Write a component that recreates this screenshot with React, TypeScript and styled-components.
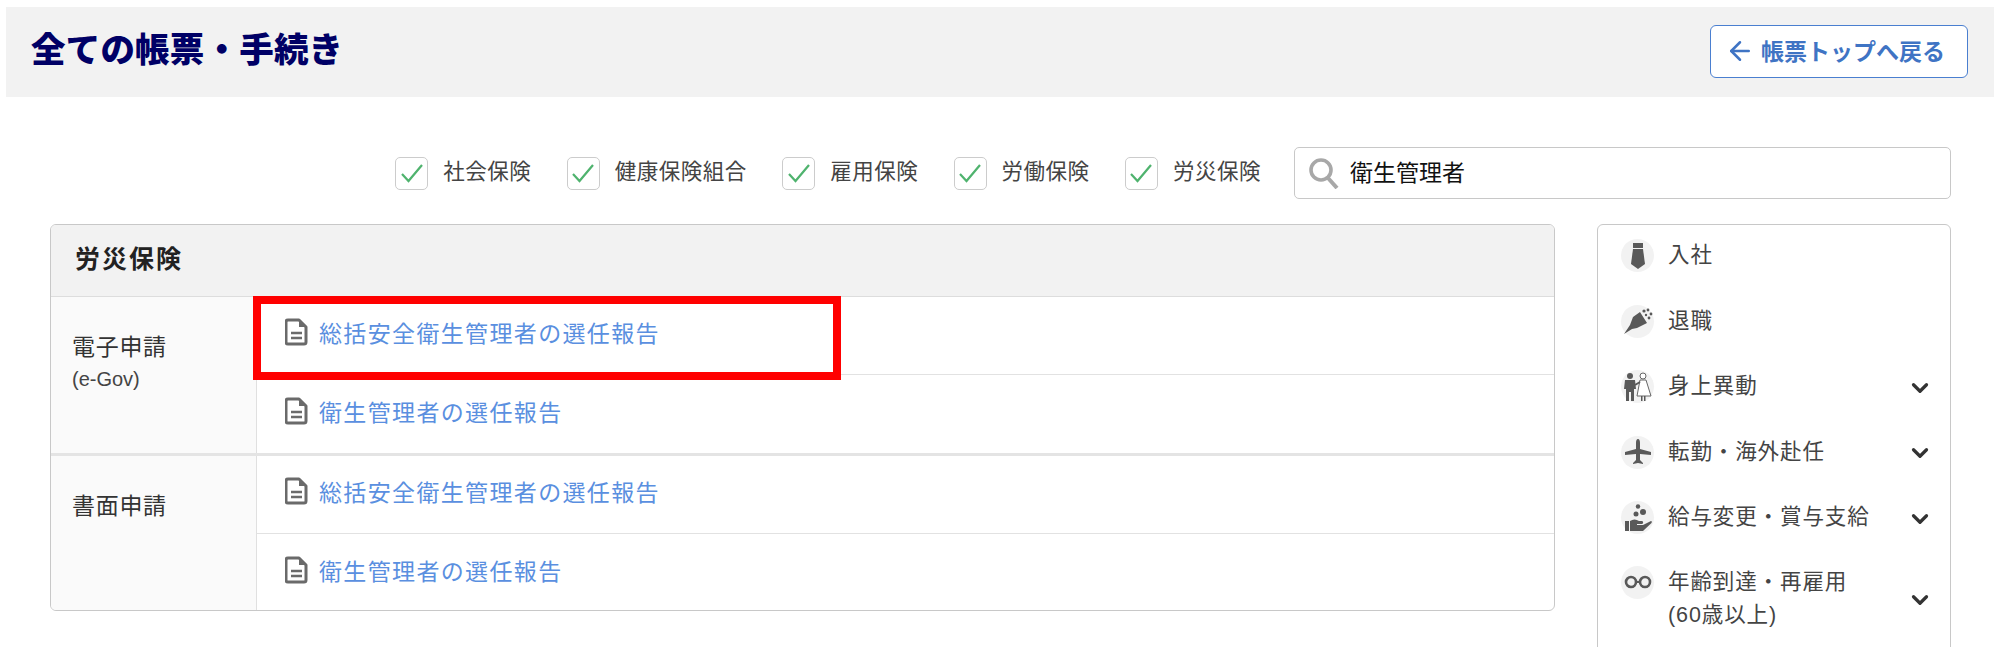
import React from "react";
import styled, { createGlobalStyle } from "styled-components";
import { ArrowLeft, ChevronDown } from "lucide-react";

const Global = createGlobalStyle`
  html, body { margin: 0; padding: 0; height: 647px; overflow: hidden; background: #fff; }
  body { font-family: "Liberation Sans", "Noto Sans CJK JP", sans-serif; color: #333; }
`;
const Page = styled.div`width: 2000px; height: 647px; overflow: hidden; padding-top: 7px; box-sizing: border-box;`;
const TitleBar = styled.header`
  margin-left: 6px; margin-right: 6px; height: 90px; background: #f2f2f2; display: flex; align-items: center;
  justify-content: space-between; padding: 0 26px 0 25px; box-sizing: border-box;
`;
const Title = styled.h1`margin: 0 0 4px; font-size: 34.5px; font-weight: 900; color: #000066; line-height: 1; letter-spacing: .2px;`;
const BackButton = styled.a`
  width: 258px; height: 53px; box-sizing: border-box; margin-bottom: 2px; padding: 0 0 3px 14px; background: #fff; border: 1px solid #4a7fd0; border-radius: 6px;
  display: flex; align-items: center; gap: 6px; color: #3f74c4; font-size: 23px; font-weight: 700; letter-spacing: 0;
  svg { margin-top: 3px; }
`;
const Filters = styled.div`
  margin-top: 50px; padding-right: 49px; display: flex; justify-content: flex-end; align-items: center; height: 52px; gap: 33px;
`;
const Checks = styled.div`display: flex; gap: 35.4px; align-items: center;`;
const CheckItem = styled.label`display: flex; align-items: center; gap: 15px; font-size: 21.5px; letter-spacing: .5px; color: #444; line-height: 33px;`;
const CheckLabel = styled.span`margin-bottom: 2px;`;
const CheckBox = styled.span`
  width: 33px; height: 33px; box-sizing: border-box; border: 1.5px solid #ccc; border-radius: 5px; display: flex; align-items: center; justify-content: center; background: #fff;
`;
const SearchBox = styled.div`
  width: 657px; height: 52px; box-sizing: border-box; border: 1px solid #c8c8c8; border-radius: 5px; display: flex; align-items: center;
  padding: 0 0 0 13px; gap: 11px; font-size: 23px; letter-spacing: 0; color: #111;
`;
const SearchText = styled.span`margin-bottom: 4px;`;
const Content = styled.div`margin: 25px 49px 0 50px; display: flex; gap: 42px; align-items: flex-start; position: relative;`;
const Card = styled.section`
  position: relative; width: 1505px; height: 387px; box-sizing: border-box; border: 1.5px solid #c8c8c8; border-radius: 6px; overflow: hidden;
`;
const CardHead = styled.div`
  height: 72px; box-sizing: border-box; background: #f2f2f2; border-bottom: 1px solid #ddd; padding: 0 0 7px 24px; display: flex; align-items: center;
  font-size: 25px; font-weight: 700; letter-spacing: 2px; color: #222;
`;
const Group = styled.div<{ $last?: boolean }>`
  display: flex; border-bottom: ${(p) => (p.$last ? "0" : "3px solid #e4e4e4")};
`;
const GroupLabel = styled.div`
  width: 206px; box-sizing: border-box; flex: none; background: #fafafa; border-right: 1px solid #e0e0e0; padding: 34px 0 0 21px;
  font-size: 23px; letter-spacing: .7px; line-height: 32px; color: #333;
`;
const Sub = styled.div`font-size: 20px; letter-spacing: 0; line-height: 32px; color: #444;`;
const Rows = styled.div`flex: 1;`;
const Row = styled.div<{ $h: number }>`
  height: ${(p) => p.$h}px; box-sizing: border-box; display: flex; align-items: center; padding: 0 0 7px 28px; gap: 11px; border-bottom: 1px solid #e2e2e2;
  &:last-child { border-bottom: 0; }
`;
const DocLink = styled.a`font-size: 23px; letter-spacing: 1.35px; color: #5a8fe0;`;
const Highlight = styled.div`
  position: absolute; left: 202px; top: 70.5px; width: 588px; height: 84px; box-sizing: border-box; border: 8px solid #f00; pointer-events: none;
`;
const Side = styled.nav`
  width: 354px; flex: none; box-sizing: border-box; border: 1.5px solid #c8c8c8; border-radius: 6px; padding: 0 0 60px 23px;
`;
const SideItem = styled.div<{ $tall?: boolean }>`
  display: flex; box-sizing: border-box; align-items: ${(p) => (p.$tall ? "flex-start" : "center")}; height: ${(p) => (p.$tall ? 100 : 65.5)}px;
  padding: ${(p) => (p.$tall ? "13px 17px 0 0" : "0 17px 4px 0")};
  font-size: 21.5px; letter-spacing: .9px; color: #444; line-height: 33px;
`;
const IconCircle = styled.span`
  width: 33px; height: 33px; flex: none; border-radius: 50%; background: #f2f2f2; display: flex; align-items: center; justify-content: center; margin-right: 14px;
`;
const SideText = styled.span`flex: 1;`;
const Chevron = styled.span<{ $tall?: boolean }>`display: flex; color: #333; margin-top: ${(p) => (p.$tall ? "21px" : "2px")};`;

const G = "#595959";
const Tie = () => (
  <svg width="20" height="28" viewBox="0 0 20 28"><path d="M5 1h10v5H5z" fill={G} /><path d="M5 7h10l2 15-7 5-7-5z" fill={G} /></svg>
);
const Bouquet = () => (
  <svg width="30" height="30" viewBox="0 0 30 30">
    <path d="M1 28l8-5 5-1 10-5-7-11-7 5-3 8-6 9z" fill={G} />
    <circle cx="21" cy="5" r="1.6" fill={G} /><circle cx="25" cy="4" r="1.4" fill={G} /><circle cx="28" cy="8" r="1.4" fill={G} /><circle cx="26" cy="12" r="1.4" fill={G} /><circle cx="23" cy="9" r="1.2" fill={G} />
  </svg>
);
const Couple = () => (
  <svg width="31" height="31" viewBox="0 0 31 31">
    <circle cx="8" cy="5" r="3" fill={G} /><path d="M3 9h10l1 9h-2v12H9v-9H7v9H4V18H2z" fill={G} />
    <circle cx="21" cy="5" r="3" fill="#fff" stroke="#666" /><path d="M18 9h6l5 16H15z" fill="#fff" stroke="#666" /><path d="M19 25h1.5v5H19zM22 25h1.5v5H22z" fill={G} /><path d="M13 14l5-3" stroke={G} strokeWidth="2" />
  </svg>
);
const Plane = () => (
  <svg width="28" height="28" viewBox="0 0 28 28"><path d="M14 1c1.5 0 2 2 2 4v6l11 3v3l-11-1v6l3 3v1l-5-1-5 1v-1l3-3v-6L1 17v-3l11-3V5c0-2 .5-4 2-4z" fill={G} /></svg>
);
const Hand = () => (
  <svg width="28" height="28" viewBox="0 0 28 28">
    <circle cx="14" cy="2.5" r="2.2" fill={G} /><circle cx="19" cy="8" r="3" fill={G} /><circle cx="12" cy="10" r="2.5" fill={G} />
    <path d="M1 17h4v10H1zM6 17c3-2 6-2 9 0h3c1.5 0 1.5 3 0 3h-5v1h6l8-4c1 0 1 1 .5 2L19 27H6z" fill={G} />
  </svg>
);
const Glasses = () => (
  <svg width="28" height="14" viewBox="0 0 28 14"><circle cx="7" cy="7" r="5" fill="none" stroke={G} strokeWidth="2.6" /><circle cx="21" cy="7" r="5" fill="none" stroke={G} strokeWidth="2.6" /><path d="M12 7h4" stroke={G} strokeWidth="2" /></svg>
);
const Doc = () => (
  <svg width="23" height="28" viewBox="0 0 23 28" style={{ flex: "none" }}>
    <path d="M3 2h11l7 7v15a2 2 0 0 1-2 2H3a2 2 0 0 1-2-2V4a2 2 0 0 1 2-2z" fill="#fff" stroke="#6a6a6a" strokeWidth="3" strokeLinejoin="round" />
    <path d="M14 2v7h7z" fill="#6a6a6a" /><path d="M6 15h11M6 20h11" stroke="#6a6a6a" strokeWidth="2.6" />
  </svg>
);
const Check = () => (
  <svg width="24" height="20" viewBox="0 0 24 20"><path d="M2 11l6.5 7L22 2" fill="none" stroke="#4fb36e" strokeWidth="2.2" /></svg>
);
const Magnifier = () => (
  <svg width="31" height="32" viewBox="0 0 31 32"><circle cx="13" cy="13" r="10" fill="none" stroke="#a8a8a8" strokeWidth="3.6" /><path d="M20 21l9 10" stroke="#a8a8a8" strokeWidth="4" /></svg>
);

const filters = ["社会保険", "健康保険組合", "雇用保険", "労働保険", "労災保険"];
const A = "総括安全衛生管理者の選任報告";
const B = "衛生管理者の選任報告";
const Down = () => <ChevronDown size={26} strokeWidth={3} />;

export default function App() {
  return (
    <Page>
      <Global />
      <TitleBar>
        <Title>全ての帳票・手続き</Title>
        <BackButton><ArrowLeft size={30} strokeWidth={2} />帳票トップへ戻る</BackButton>
      </TitleBar>
      <Filters>
        <Checks>
          {filters.map((f) => (
            <CheckItem key={f}><CheckBox><Check /></CheckBox><CheckLabel>{f}</CheckLabel></CheckItem>
          ))}
        </Checks>
        <SearchBox><Magnifier /><SearchText>衛生管理者</SearchText></SearchBox>
      </Filters>
      <Content>
        <Card>
          <CardHead>労災保険</CardHead>
          <Group>
            <GroupLabel>電子申請<Sub>(e-Gov)</Sub></GroupLabel>
            <Rows>
              <Row $h={78}><Doc /><DocLink>{A}</DocLink></Row>
              <Row $h={78}><Doc /><DocLink>{B}</DocLink></Row>
            </Rows>
          </Group>
          <Group $last>
            <GroupLabel>書面申請</GroupLabel>
            <Rows>
              <Row $h={78}><Doc /><DocLink>{A}</DocLink></Row>
              <Row $h={78}><Doc /><DocLink>{B}</DocLink></Row>
            </Rows>
          </Group>
          <Highlight />
        </Card>
        <Side>
          <SideItem><IconCircle><Tie /></IconCircle><SideText>入社</SideText></SideItem>
          <SideItem><IconCircle><Bouquet /></IconCircle><SideText>退職</SideText></SideItem>
          <SideItem><IconCircle><Couple /></IconCircle><SideText>身上異動</SideText><Chevron><Down /></Chevron></SideItem>
          <SideItem><IconCircle><Plane /></IconCircle><SideText>転勤・海外赴任</SideText><Chevron><Down /></Chevron></SideItem>
          <SideItem><IconCircle><Hand /></IconCircle><SideText>給与変更・賞与支給</SideText><Chevron><Down /></Chevron></SideItem>
          <SideItem $tall><IconCircle><Glasses /></IconCircle><SideText>年齢到達・再雇用<br />(60歳以上)</SideText><Chevron $tall><Down /></Chevron></SideItem>
        </Side>
      </Content>
    </Page>
  );
}
